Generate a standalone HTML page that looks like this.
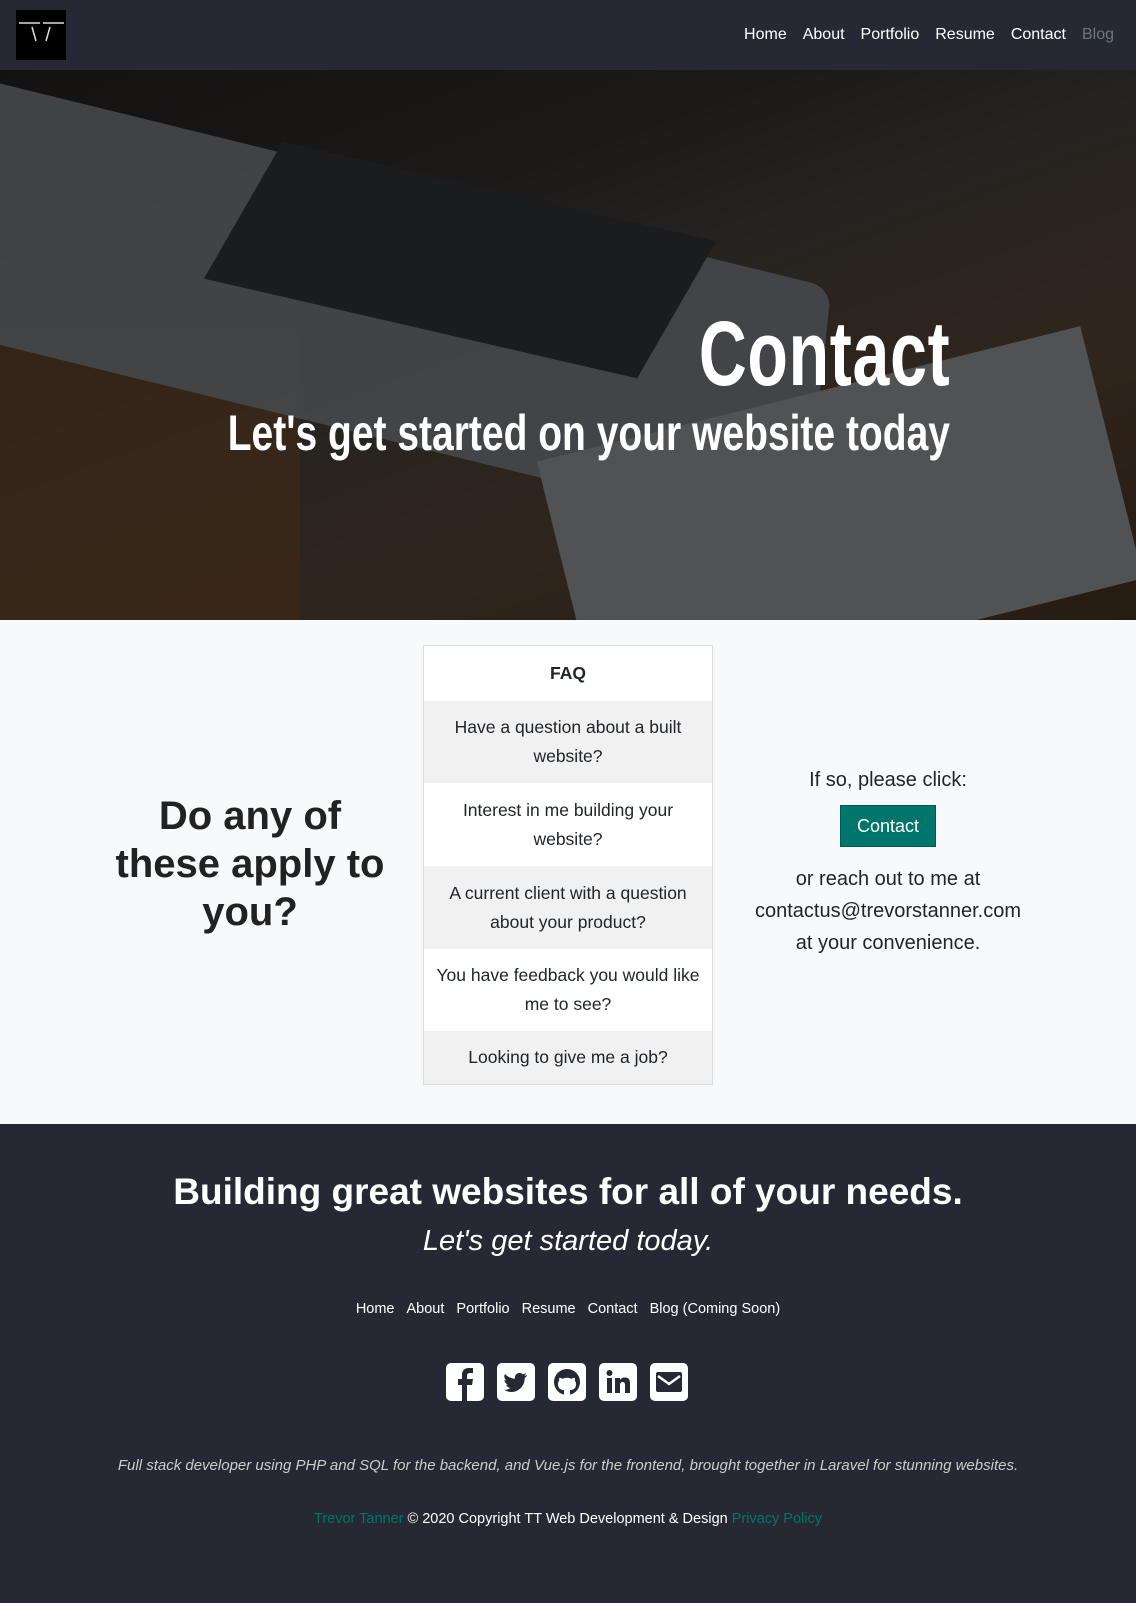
<!DOCTYPE html>
<html><head><meta charset="utf-8"><style>
*{box-sizing:border-box;margin:0;padding:0}
body{width:1136px;height:1603px;overflow:hidden;font-family:"Liberation Sans",sans-serif;background:#f8f9fa;color:#212529}
.nav{height:70px;background:#262833;position:relative}
.logo{position:absolute;left:16px;top:10px;width:50px;height:50px;background:#000}
.nav ul{position:absolute;right:22px;top:26px;list-style:none;display:flex;gap:16px;font-size:16px;color:#fff}
.hero{height:550px;position:relative;overflow:hidden;background:linear-gradient(160deg,#1f1c1b 0%,#2c2826 30%,#3a3734 45%,#4a3a2c 70%,#3b2a1c 100%)}
.lap{position:absolute;left:-40px;top:110px;width:860px;height:260px;background:#6a6f74;transform:skewY(8deg) rotate(6deg);border-radius:20px;opacity:.9}
.kb{position:absolute;left:220px;top:120px;width:480px;height:140px;background:#2a2c2e;transform:skewX(-20deg) rotate(12deg)}
.pad{position:absolute;left:560px;top:320px;width:560px;height:260px;background:#7d7f80;transform:rotate(-14deg)}
.wood{position:absolute;left:0;top:260px;width:300px;height:300px;background:#5a3d25;opacity:.8}
.h1{position:absolute;right:186px;top:232px;font-size:92px;font-weight:bold;color:#fff;transform:scaleX(.72);transform-origin:right;letter-spacing:1px}
.h2{position:absolute;right:186px;top:334px;font-size:50px;font-weight:bold;color:#fff;transform:scaleX(.78);transform-origin:right;white-space:nowrap}
.sec{height:504px;position:relative;background:#f8f9fa}
.q{position:absolute;left:100px;top:172px;width:300px;text-align:center;font-size:40px;font-weight:bold;line-height:48px;color:#222}
.faq{position:absolute;left:423px;top:25px;width:290px;border:1px solid #dcdcdc;background:#fff}
.faq div{text-align:center;font-size:17.5px;line-height:29px;padding:0 10px;display:flex;align-items:center;justify-content:center}
.g{background:#f1f1f1}
.right{position:absolute;left:738px;top:144px;width:300px;text-align:center;font-size:20px;line-height:32px}
.btn{display:inline-block;background:#00756b;color:#fff;font-size:18px;padding:6px 16px;margin:9px 0 16px;border:1px solid #005a52;line-height:28px}
.foot{height:479px;background:#262833;color:#fff;text-align:center;position:relative}
.ft1{position:absolute;top:47px;width:100%;font-size:37px;font-weight:bold}
.ft2{position:absolute;top:101px;width:100%;font-size:29px;font-style:italic}
.fl{position:absolute;top:177px;width:100%;font-size:14.5px}
.fl span{margin:0 6px}
.ic{position:absolute;top:239px;left:446px;display:flex;gap:13px}
.ic div{width:38px;height:38px;background:#fff;border-radius:5px;display:flex;align-items:center;justify-content:center}
.fd{position:absolute;top:333px;width:100%;font-size:15px;font-style:italic;color:#ccc}
.cp{position:absolute;top:387px;width:100%;font-size:14.5px}
.t{color:#00756b}
</style></head><body>
<div class="nav"><div class="logo"><svg width="50" height="50"><path d="M3 13h21M27 13h21M16 17l4 14M34 17l-4 14" stroke="#ddd" stroke-width="1.5"/></svg></div>
<ul><li>Home</li><li>About</li><li>Portfolio</li><li>Resume</li><li>Contact</li><li style="color:#6c757d">Blog</li></ul></div>
<div class="hero"><div class="wood"></div><div class="lap"></div><div class="kb"></div><div class="pad"></div>
<div style="position:absolute;inset:0;background:rgba(0,0,0,.35)"></div>
<div class="h1">Contact</div><div class="h2">Let's get started on your website today</div></div>
<div class="sec">
<div class="q">Do any of<br>these apply to<br>you?</div>
<div class="faq">
<div style="height:55px;font-weight:bold">FAQ</div>
<div class="g" style="height:82px">Have a question about a built website?</div>
<div style="height:83px">Interest in me building your website?</div>
<div class="g" style="height:83px">A current client with a question about your product?</div>
<div style="height:82px">You have feedback you would like me to see?</div>
<div class="g" style="height:53px">Looking to give me a job?</div>
</div>
<div class="right">If so, please click:<br><span class="btn">Contact</span><br>or reach out to me at<br>contactus@trevorstanner.com<br>at your convenience.</div>
</div>
<div class="foot">
<div class="ft1">Building great websites for all of your needs.</div>
<div class="ft2">Let's get started today.</div>
<div class="fl"><span>Home</span><span>About</span><span>Portfolio</span><span>Resume</span><span>Contact</span><span>Blog (Coming Soon)</span></div>
<div class="ic">
<div><svg width="38" height="38"><path d="M21 38V22h5l1-6h-6v-3c0-2 1-3 3-3h3V5h-4c-5 0-7 3-7 7v4h-4v6h4v16z" fill="#262833"/></svg></div>
<div><svg width="38" height="38"><path d="M30 12c-1 .5-2 .8-3 .9 1-.7 1.8-1.6 2-2.7-1 .6-2 1-3 1.2a4.7 4.7 0 0 0-8 4.3C14 15.5 10.5 13.7 8 11c-1.4 2.4-.6 5 1.5 6.4-.8 0-1.5-.2-2.1-.6 0 2.3 1.6 4.2 3.8 4.7-.7.2-1.4.2-2.1.1.6 1.9 2.4 3.2 4.4 3.3A9.5 9.5 0 0 1 7 26.8 13.4 13.4 0 0 0 27.7 15c1-.7 1.7-1.6 2.3-2.5z" fill="#262833"/></svg></div>
<div><svg width="38" height="38"><circle cx="19" cy="19" r="13" fill="#262833"/><path d="M16 32v-5c-4 0-6-2-6-6 0-1.5.5-2.5 1.2-3.3-.2-.8-.2-2 .3-3 1.3 0 2.3.7 3 1.2a10 10 0 0 1 9 0c.7-.5 1.7-1.2 3-1.2.5 1 .5 2.2.3 3 .7.8 1.2 1.8 1.2 3.3 0 4-2 6-6 6v5z" fill="#fff"/></svg></div>
<div><svg width="38" height="38"><rect x="8" y="15" width="5" height="15" fill="#262833"/><circle cx="10.5" cy="10" r="3" fill="#262833"/><path d="M16 15h5v2c1-1.5 2.5-2.5 5-2.5 3.5 0 5 2 5 6V30h-5v-8c0-2-.7-3-2.3-3S21 20 21 22v8h-5z" fill="#262833"/></svg></div>
<div><svg width="38" height="38"><rect x="6" y="9" width="26" height="20" rx="2" fill="#262833"/><path d="M8 13l11 8 11-8" stroke="#fff" stroke-width="2.5" fill="none"/></svg></div>
</div>
<div class="fd">Full stack developer using PHP and SQL for the backend, and Vue.js for the frontend, brought together in Laravel for stunning websites.</div>
<div class="cp"><span class="t">Trevor Tanner</span> © 2020 Copyright TT Web Development &amp; Design <span class="t">Privacy Policy</span></div>
</div>
</body></html>
